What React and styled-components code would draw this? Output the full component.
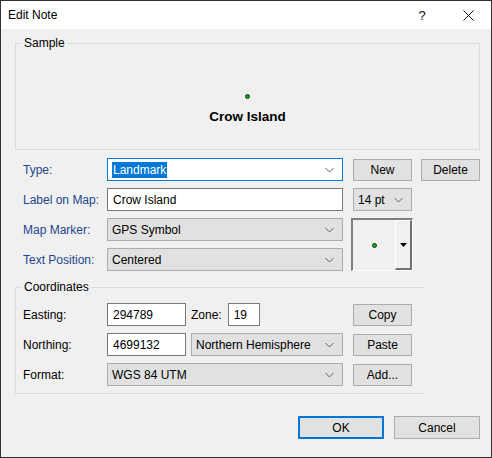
import React, { useState } from 'react';
import styled, { createGlobalStyle } from 'styled-components';

const GlobalStyle = createGlobalStyle`
  html, body {
    margin: 0;
    padding: 0;
    background: #ffffff;
  }
  * {
    box-sizing: border-box;
  }
`;

const Window = styled.div`
  width: 492px;
  height: 458px;
  border: 1px solid #333333;
  background: #f0f0f0;
  font-family: 'Liberation Sans', Arial, sans-serif;
  font-size: 12px;
  color: #000;
  display: flex;
  flex-direction: column;
  overflow: hidden;
`;

const TitleBar = styled.div`
  height: 28px;
  background: #ffffff;
  display: flex;
  align-items: center;
  padding-left: 7px;
  flex-shrink: 0;
`;

const Title = styled.div`
  flex: 1;
  font-size: 12px;
`;

const TitleButton = styled.div`
  width: 46px;
  height: 28px;
  display: flex;
  align-items: center;
  justify-content: center;
  font-size: 13px;
  color: #111;
`;

const Body = styled.div`
  padding: 14px 11px 0 14px;
  display: flex;
  flex-direction: column;
`;

const Group = styled.div`
  position: relative;
  border: 1px solid #dcdcdc;
  border-right: ${(p) => (p.$open ? 'none' : '1px solid #dcdcdc')};
  width: ${(p) => p.$width}px;
  margin-top: ${(p) => p.$top || 0}px;
`;

const GroupLabel = styled.span`
  position: absolute;
  left: 6px;
  top: -8px;
  padding: 0 2px;
  background: #f0f0f0;
  line-height: 14px;
`;

const SampleArea = styled.div`
  height: 105px;
  display: flex;
  flex-direction: column;
  align-items: center;
  padding-top: 50px;
`;

const Dot = styled.div`
  width: 5px;
  height: 5px;
  border-radius: 50%;
  background: #00b000;
  border: 1px solid #1a3a1a;
`;

const SampleText = styled.div`
  margin-top: 10px;
  font-weight: bold;
  font-size: 13.5px;
  line-height: 16px;
`;

const Label = styled.div`
  color: ${(p) => (p.$blue ? '#23468f' : '#000')};
  white-space: nowrap;
`;

const FormGrid = styled.div`
  display: grid;
  grid-template-columns: 84px 246px 68px 59px;
  grid-auto-rows: 23px;
  row-gap: 7px;
  margin-top: 8px;
  padding-left: 8px;
  align-items: center;

  & > ${Label} {
    grid-column: 1;
  }
`;

const Field = styled.div`
  width: ${(p) => p.$w}px;
  height: 23px;
  display: flex;
  align-items: center;
  padding-left: ${(p) => (p.$combo ? 4 : 5)}px;
  padding-right: 8px;
  background: ${(p) => (p.$combo ? '#e1e1e1' : '#ffffff')};
  border: 1px solid ${(p) => (p.$focus ? '#0078d7' : p.$combo ? '#adadad' : '#7a7a7a')};
  white-space: nowrap;
`;

const FieldText = styled.span`
  flex: 1;
`;

const Selected = styled.span`
  background: #0078d7;
  color: #fff;
  padding: 1px 1px;
  margin-left: -1px;
`;

const Button = styled.div`
  width: ${(p) => p.$w || 59}px;
  height: ${(p) => p.$h || 22}px;
  display: flex;
  align-items: center;
  justify-content: center;
  background: #e1e1e1;
  border: ${(p) => (p.$default ? '2px solid #0078d7' : '1px solid #adadad')};
`;

const MarkerPicker = styled.div`
  grid-column: 3;
  grid-row: 3 / span 2;
  align-self: start;
  margin-left: -2px;
  width: 62px;
  height: 53px;
  border-top: 2px solid #808080;
  border-left: 2px solid #808080;
  border-right: 1px solid #ffffff;
  border-bottom: 1px solid #ffffff;
  display: flex;
  background: #f0f0f0;
`;

const MarkerView = styled.div`
  flex: 1;
  display: flex;
  align-items: center;
  justify-content: center;
`;

const MarkerDrop = styled.div`
  width: 17px;
  border-left: 1px solid #ffffff;
  border-top: 1px solid #ffffff;
  border-right: 2px solid #707070;
  border-bottom: 2px solid #707070;
  background: #f0f0f0;
  display: flex;
  align-items: center;
  justify-content: center;
`;

const CoordGrid = styled.div`
  display: grid;
  grid-template-columns: 84px 246px 59px;
  grid-auto-rows: 23px;
  row-gap: 7px;
  padding: 15px 0 7px 7px;
  align-items: center;
`;

const Inline = styled.div`
  display: flex;
  align-items: center;
`;

const ZoneLabel = styled.span`
  margin: 0 6px 0 5px;
`;

const Spacer = styled.span`
  width: 5px;
`;

const Footer = styled.div`
  display: flex;
  justify-content: flex-end;
  gap: 10px;
  margin-top: 22px;
`;

const Chevron = () => (
  <svg width="9" height="6" viewBox="0 0 9 6">
    <path d="M0.5 1 L4.5 5 L8.5 1" fill="none" stroke="#606060" strokeWidth="1" />
  </svg>
);

const Combo = ({ w, combo = true, focus, children }) => (
  <Field $w={w} $combo={combo} $focus={focus}>
    <FieldText>{children}</FieldText>
    <Chevron />
  </Field>
);

export default function App() {
  const [label] = useState('Crow Island');

  return (
    <>
      <GlobalStyle />
      <Window>
        <TitleBar>
          <Title>Edit Note</Title>
          <TitleButton>?</TitleButton>
          <TitleButton>
            <svg width="11" height="11" viewBox="0 0 11 11">
              <path d="M0.5 0.5 L10.5 10.5 M10.5 0.5 L0.5 10.5" stroke="#111" strokeWidth="1" />
            </svg>
          </TitleButton>
        </TitleBar>
        <Body>
          <Group $width={465} $top={0}>
            <GroupLabel>Sample</GroupLabel>
            <SampleArea>
              <Dot />
              <SampleText>{label}</SampleText>
            </SampleArea>
          </Group>

          <FormGrid>
            <Label $blue>Type:</Label>
            <Field $w={236} $focus>
              <FieldText>
                <Selected>Landmark</Selected>
              </FieldText>
              <Chevron />
            </Field>
            <Button>New</Button>
            <Button>Delete</Button>

            <Label $blue>Label on Map:</Label>
            <Field $w={236}>
              <FieldText>{label}</FieldText>
            </Field>
            <Combo w={59}>14 pt</Combo>

            <Label $blue>Map Marker:</Label>
            <Combo w={236}>GPS Symbol</Combo>
            <MarkerPicker>
              <MarkerView>
                <Dot />
              </MarkerView>
              <MarkerDrop>
                <svg width="7" height="4" viewBox="0 0 7 4">
                  <path d="M0 0 L7 0 L3.5 4 Z" fill="#000" />
                </svg>
              </MarkerDrop>
            </MarkerPicker>

            <Label $blue>Text Position:</Label>
            <Combo w={236}>Centered</Combo>
          </FormGrid>

          <Group $width={409} $top={16} $open>
            <GroupLabel>Coordinates</GroupLabel>
            <CoordGrid>
              <Label>Easting:</Label>
              <Inline>
                <Field $w={79}>294789</Field>
                <ZoneLabel>Zone:</ZoneLabel>
                <Field $w={32}>19</Field>
              </Inline>
              <Button>Copy</Button>

              <Label>Northing:</Label>
              <Inline>
                <Field $w={79}>4699132</Field>
                <Spacer />
                <Combo w={152}>Northern Hemisphere</Combo>
              </Inline>
              <Button>Paste</Button>

              <Label>Format:</Label>
              <Combo w={236}>WGS 84 UTM</Combo>
              <Button>Add...</Button>
            </CoordGrid>
          </Group>

          <Footer>
            <Button $w={86} $h={23} $default>OK</Button>
            <Button $w={86} $h={23}>Cancel</Button>
          </Footer>
        </Body>
      </Window>
    </>
  );
}
